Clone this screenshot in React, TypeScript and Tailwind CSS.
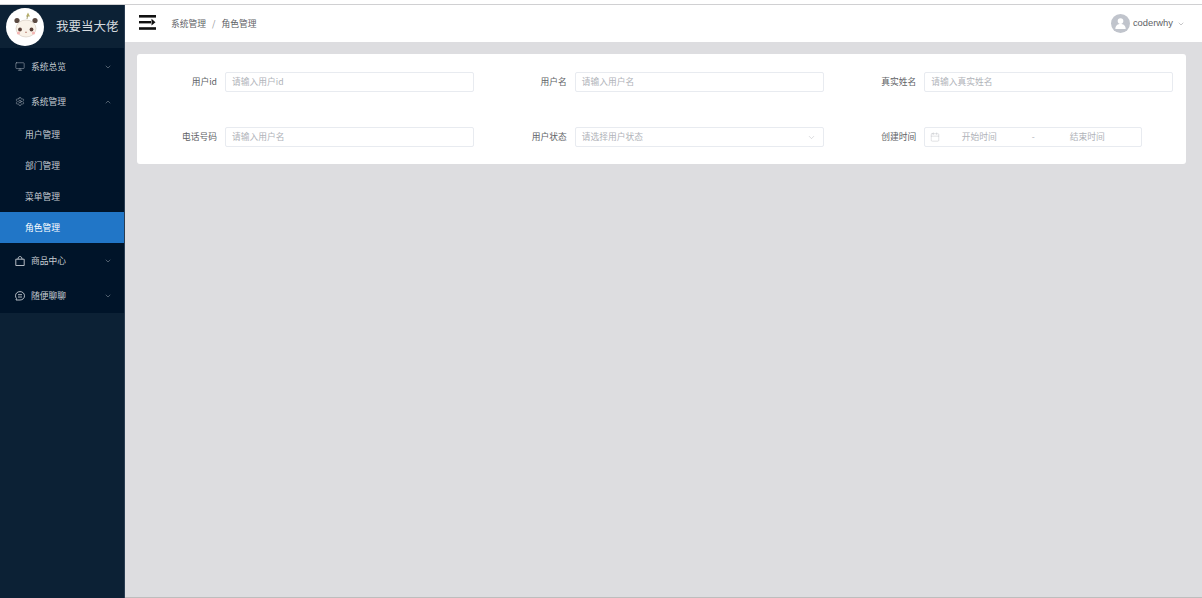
import React from "react";
import { ChevronDown, ChevronUp, Monitor, Settings, Calendar } from "lucide-react";

const font = { fontFamily: '"Noto Sans CJK SC","Liberation Sans",sans-serif' };

function Logo() {
  return (
    <svg width="38" height="38" viewBox="0 0 38 38" className="shrink-0">
      <circle cx="19" cy="19" r="19" fill="#fff" />
      <path d="M22 4.5 L24 8.5 L20 8.5 Z" fill="#b5ad6a" />
      <path d="M21.5 8 L21 11" stroke="#8f8a58" strokeWidth="0.8" />
      <circle cx="11" cy="12.5" r="2.6" fill="#5b4a42" />
      <circle cx="29" cy="12.5" r="2.6" fill="#5b4a42" />
      <ellipse cx="20" cy="20.5" rx="10" ry="8.5" fill="#f9f2e8" stroke="#c9bcae" strokeWidth="0.5" />
      <circle cx="14" cy="21.5" r="1.9" fill="#5a4038" />
      <circle cx="25.5" cy="21.5" r="1.9" fill="#5a4038" />
      <circle cx="12.5" cy="25" r="1.6" fill="#f4b5b3" />
      <circle cx="27.5" cy="25" r="1.6" fill="#f4b5b3" />
      <path d="M19 24 q1 1 2 0" stroke="#a05a50" strokeWidth="0.7" fill="none" />
    </svg>
  );
}

function BagIcon() {
  return (
    <svg width="10" height="10" viewBox="0 0 10 10" fill="none" stroke="currentColor" strokeWidth="0.9">
      <path d="M0.8 3.2 H9.2 V9.5 H0.8 Z" />
      <path d="M3 3.2 C3 1.4 3.8 0.5 5 0.5 C6.2 0.5 7 1.4 7 3.2" />
    </svg>
  );
}

function ChatIcon() {
  return (
    <svg width="10" height="10" viewBox="0 0 10 10" fill="none" stroke="currentColor" strokeWidth="0.9">
      <path d="M5 0.6 C7.6 0.6 9.5 2.4 9.5 4.8 C9.5 7.2 7.6 9 5 9 H1 L1.5 7.4 C0.8 6.6 0.5 5.8 0.5 4.8 C0.5 2.4 2.4 0.6 5 0.6 Z" />
      <path d="M3 3.7 H7 M3 6 H7" />
    </svg>
  );
}

function MenuGroup({ icon, label, open }: { icon: React.ReactNode; label: string; open?: boolean }) {
  return (
    <div className="h-[35px] flex items-center pl-[15px] pr-[12px] text-[#c6ccd3] text-[8.75px]">
      <span className="w-[10px] mr-[6px] flex items-center justify-center">{icon}</span>
      <span className="flex-1">{label}</span>
      {open ? <ChevronUp size={8} strokeWidth={1.2} /> : <ChevronDown size={8} strokeWidth={1.2} />}
    </div>
  );
}

function SubItem({ label, active }: { label: string; active?: boolean }) {
  return (
    <div
      className={
        active
          ? "h-[31px] flex items-center pl-[25px] text-[8.75px] text-white bg-[#2176c7]"
          : "h-[31px] flex items-center pl-[25px] text-[8.75px] text-[#c6ccd3]"
      }
    >
      {label}
    </div>
  );
}

function Field({ label, children }: { label: string; children: React.ReactNode }) {
  return (
    <div className="flex items-center h-[20px]">
      <label className="w-[80px] text-right text-[8.75px] text-[#606266] mr-[8px] shrink-0">{label}</label>
      {children}
    </div>
  );
}

function Input({ placeholder, arrow }: { placeholder: string; arrow?: boolean }) {
  return (
    <div className="w-[249px] h-[20px] border border-[#e8ebf0] rounded-[2px] bg-white flex items-center pl-[6px] pr-[7px] text-[8.75px] text-[#b0b3b9]">
      <span className="flex-1">{placeholder}</span>
      {arrow && <ChevronDown size={9} strokeWidth={1.1} className="text-[#a8abb2]" />}
    </div>
  );
}

export default function App() {
  return (
    <div className="w-[1202px] h-[598px] overflow-hidden flex flex-col bg-[#dddde0]" style={font}>
      <div className="h-[4px] bg-white shrink-0" />
      <div className="h-px bg-[#d0d0d2] shrink-0" />
      <div className="flex-1 flex min-h-0">
        <aside className="w-[125px] shrink-0 bg-[#0c2135] flex flex-col border-r border-[#2a3d52]">
          <div className="h-[43px] flex items-center pl-[6px] gap-[12px] bg-[#0c2135]">
            <Logo />
            <span className="text-[12.5px] text-[#d4d9de] whitespace-nowrap">我要当大佬</span>
          </div>
          <nav className="bg-[#001429] pt-px">
            <MenuGroup icon={<Monitor size={11} strokeWidth={1.1} />} label="系统总览" />
            <MenuGroup icon={<Settings size={11} strokeWidth={1.1} />} label="系统管理" open />
            <SubItem label="用户管理" />
            <SubItem label="部门管理" />
            <SubItem label="菜单管理" />
            <SubItem label="角色管理" active />
            <MenuGroup icon={<BagIcon />} label="商品中心" />
            <MenuGroup icon={<ChatIcon />} label="随便聊聊" />
          </nav>
        </aside>
        <div className="flex-1 flex flex-col min-w-0">
          <header className="h-[37px] bg-white flex items-center pl-[14px] pr-[17px] shrink-0">
            <svg width="17" height="15" viewBox="0 0 17 15" className="mr-[15px] -mt-[2px]">
              <rect x="0" y="0" width="17" height="2.6" fill="#111" />
              <rect x="0" y="6" width="12" height="2.4" fill="#111" />
              <rect x="0" y="12.2" width="17" height="2.6" fill="#111" />
              <path d="M12.5 3.8 L16.5 7.2 L12.5 10.6 Z" fill="#111" />
            </svg>
            <span className="text-[8.75px] text-[#606266]">系统管理</span>
            <span className="text-[8.75px] text-[#8a8d92] mx-[6px]">/</span>
            <span className="text-[8.75px] text-[#606266]">角色管理</span>
            <div className="ml-auto flex items-center">
              <span className="w-[19px] h-[19px] rounded-full bg-[#c0c4cc] flex items-center justify-center mr-[3px]">
                <svg width="13" height="13" viewBox="0 0 12 12">
                  <circle cx="6" cy="3.8" r="2.6" fill="#fff" />
                  <path d="M1.2 11 C1.5 7.5 3.5 6.5 6 6.5 C8.5 6.5 10.5 7.5 10.8 11 Z" fill="#fff" />
                </svg>
              </span>
              <span className="text-[9.4px] text-[#606266]" style={{ fontFamily: '"Liberation Sans",sans-serif' }}>coderwhy</span>
              <ChevronDown size={8} strokeWidth={1.1} className="ml-[4px] text-[#606266]" />
            </div>
          </header>
          <main className="flex-1 pt-[12px] pl-[12px] pr-[16px]">
            <section className="bg-white rounded-[3px] pt-[18px] pb-[17px] grid grid-cols-3 gap-y-[35px]">
              <Field label="用户id"><Input placeholder="请输入用户id" /></Field>
              <Field label="用户名"><Input placeholder="请输入用户名" /></Field>
              <Field label="真实姓名"><Input placeholder="请输入真实姓名" /></Field>
              <Field label="电话号码"><Input placeholder="请输入用户名" /></Field>
              <Field label="用户状态"><Input placeholder="请选择用户状态" arrow /></Field>
              <Field label="创建时间">
                <div className="w-[218px] h-[20px] border border-[#e8ebf0] rounded-[2px] flex items-center pl-[5px] text-[8.75px] text-[#b0b3b9]">
                  <Calendar size={10} strokeWidth={0.9} className="shrink-0" />
                  <span className="w-[74px] ml-[2px] text-center">开始时间</span>
                  <span className="w-[34px] text-center">-</span>
                  <span className="w-[74px] text-center">结束时间</span>
                </div>
              </Field>
            </section>
          </main>
          <div className="h-px bg-[#bdbdbd] shrink-0" />
        </div>
      </div>
    </div>
  );
}
